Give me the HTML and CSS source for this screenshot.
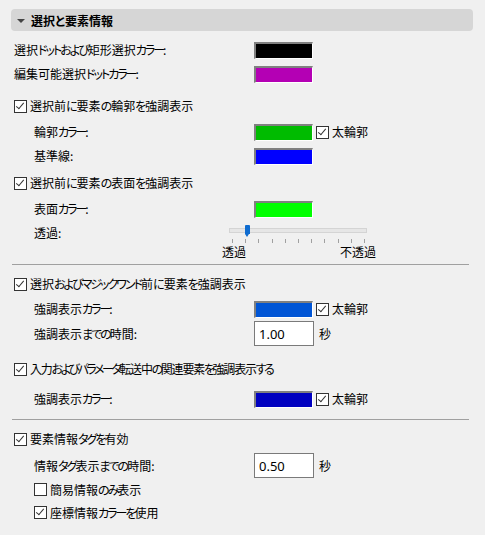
FILE: index.html
```html
<!DOCTYPE html>
<html lang="ja">
<head>
<meta charset="utf-8">
<link rel="stylesheet" href="styles.css">
</head>
<body>
<div class="panel">
  <div class="header">
    <span class="tri"></span>
    <span class="title">選択と要素情報</span>
  </div>

  <div class="row r1"><span class="label">選択<span class="k">ドットおよび</span>矩形選択<span class="k">カラー</span>:</span><span class="swatch" style="background:#000000"></span></div>
  <div class="row"><span class="label">編集可能選択<span class="k">ドットカラー</span>:</span><span class="swatch" style="background:#b400b4"></span></div>

  <div class="row cbrow m8"><span class="cb on"></span><span>選択前<span class="k1">に</span>要素<span class="k1">の</span>輪郭<span class="k1">を</span>強調表示</span></div>
  <div class="row sub m2"><span class="label">輪郭<span class="k">カラー</span>:</span><span class="swatch" style="background:#00bb00"></span><span class="cb on"></span><span class="cbtext">太輪郭</span></div>
  <div class="row sub"><span class="label">基準線:</span><span class="swatch" style="background:#0000ff"></span></div>

  <div class="row cbrow m3"><span class="cb on"></span><span>選択前<span class="k1">に</span>要素<span class="k1">の</span>表面<span class="k1">を</span>強調表示</span></div>
  <div class="row sub m2"><span class="label">表面<span class="k">カラー</span>:</span><span class="swatch" style="background:#00ff00"></span></div>
  <div class="slider-row">
    <span class="label">透過:</span>
    <div class="slider">
      <div class="track"><span class="thumb"></span></div>
      <div class="ticks"><i></i><i></i><i></i><i></i><i></i><i></i><i></i><i></i><i></i><i></i><i></i></div>
    </div>
  </div>
  <div class="slider-labels"><span>透過</span><span>不透過</span></div>
  <div class="sep s1"></div>

  <div class="row cbrow m7"><span class="cb on"></span><span>選択<span class="k">およびマジックワンド</span>前<span class="k1">に</span>要素<span class="k1">を</span>強調表示</span></div>
  <div class="row sub m1"><span class="label">強調表示<span class="k">カラー</span>:</span><span class="swatch" style="background:#0055d5"></span><span class="cb on"></span><span class="cbtext">太輪郭</span></div>
  <div class="row sub h25"><span class="label">強調表示<span class="k">までの</span>時間:</span><span class="num">1.00</span><span class="unit">秒</span></div>

  <div class="row cbrow m10"><span class="cb on"></span><span class="tight">入力<span class="k">およびパラメータ</span>転送中<span class="k">の</span>関連要素<span class="k">を</span>強調表示<span class="k">する</span></span></div>
  <div class="row sub m6"><span class="label">強調表示<span class="k">カラー</span>:</span><span class="swatch" style="background:#0000c0"></span><span class="cb on"></span><span class="cbtext">太輪郭</span></div>
  <div class="sep s2"></div>

  <div class="row cbrow m7"><span class="cb on"></span><span>要素情報<span class="k">タグを</span>有効</span></div>
  <div class="row sub h25 m2"><span class="label">情報<span class="k">タグ</span>表示<span class="k">までの</span>時間:</span><span class="num">0.50</span><span class="unit">秒</span></div>
  <div class="row sub h23"><span class="cb"></span><span>簡易情報<span class="k">のみ</span>表示</span></div>
  <div class="row sub h23"><span class="cb on"></span><span>座標情報<span class="k">カラーを</span>使用</span></div>
</div>
</body>
</html>
```
FILE: styles.css
```css
html, body {
  margin: 0;
  padding: 0;
  background: #f0f0f0;
}
body {
  font-family: "Noto Sans CJK JP", "Noto Sans", sans-serif;
  font-size: 12px;
  color: #000;
  font-feature-settings: "palt";
  width: 485px;
  height: 535px;
  overflow: hidden;
}
.k { letter-spacing: -2px; }
.k1 { letter-spacing: -1px; }
.tight { letter-spacing: -1.2px; }
.tight .k { letter-spacing: -2.5px; }
.panel {
  padding: 9px 14px 0 11px;
  display: flex;
  flex-direction: column;
}
.header {
  height: 22px;
  background: #d6d6d6;
  border-radius: 4px;
  display: flex;
  align-items: center;
  margin-right: -2px;
}
.tri {
  width: 0;
  height: 0;
  border-left: 4px solid transparent;
  border-right: 4px solid transparent;
  border-top: 4px solid #444;
  margin-left: 6px;
  margin-right: 6px;
  margin-top: 1px;
}
.title {
  font-weight: bold;
  font-size: 12px;
}
.row {
  height: 24px;
  display: flex;
  align-items: center;
  padding-left: 3px;
  line-height: 1;
}
.r1 { margin-top: 7px; }
.m1 { margin-top: 1px; }
.m2 { margin-top: 2px; }
.m3 { margin-top: 3px; }
.m6 { margin-top: 6px; }
.m7 { margin-top: 7px; }
.m8 { margin-top: 8px; }
.m10 { margin-top: 11px; }
.h25 { height: 25px; }
.h23 { height: 23px; }
.sub { padding-left: 23px; }
.label {
  width: 220px;
  flex: none;
  white-space: nowrap;
}
.row.sub .label { width: 220px; }
.row.r1 .label, .row:not(.sub) .label { width: 240px; }
.swatch {
  flex: none;
  width: 56px;
  height: 14px;
  border-style: solid;
  border-width: 2px 1px 1px 2px;
  border-color: #808080 #ffffff #ffffff #808080;
}
.cb {
  flex: none;
  width: 11px;
  height: 11px;
  border: 1px solid #333;
  background: #fff;
  position: relative;
  margin-right: 3px;
}
.cb.on::after {
  content: "";
  position: absolute;
  left: 3px;
  top: 0px;
  width: 3px;
  height: 7px;
  border-right: 1.5px solid #333;
  border-bottom: 1.5px solid #333;
  transform: rotate(40deg);
}
.swatch + .cb { margin-left: 3px; }
.cbtext { white-space: nowrap; }
.num {
  flex: none;
  box-sizing: border-box;
  width: 60px;
  height: 25px;
  border: 1px solid #7a7a7a;
  background: #fff;
  font-family: "Noto Sans", "Open Sans", sans-serif;
  font-size: 13px;
  display: flex;
  align-items: center;
  padding-left: 4px;
  padding-top: 1px;
}
.unit { margin-left: 5px; }
.slider-row {
  height: 22px;
  display: flex;
  align-items: center;
  padding-left: 23px;
}
.slider-row .label { width: 195px; padding-top: 1px; }
.slider {
  width: 138px;
  position: relative;
  height: 22px;
}
.track {
  position: absolute;
  left: 0;
  top: 7px;
  width: 136px;
  height: 3px;
  border: 1px solid #d4d4d4;
  background: #e6e6e6;
}
.thumb {
  position: absolute;
  left: 15px;
  top: -4px;
  width: 5px;
  height: 9px;
  background: #0f6cd0;
  border-radius: 1px 1px 0 0;
}
.thumb::after {
  content: "";
  position: absolute;
  left: 0;
  top: 9px;
  border-left: 2.5px solid transparent;
  border-right: 2.5px solid transparent;
  border-top: 3px solid #0f6cd0;
}
.ticks {
  position: absolute;
  left: 3px;
  top: 18px;
  width: 133px;
  display: flex;
  justify-content: space-between;
}
.ticks i {
  display: block;
  width: 1px;
  height: 4px;
  background: #a0a0a0;
}
.slider-labels {
  height: 18px;
  display: flex;
  justify-content: space-between;
  align-items: center;
  margin-left: 211px;
  width: 154px;
  line-height: 1;
}
.sep {
  height: 1px;
  background: #a0a0a0;
  margin-right: 2px;
  margin-left: 1px;
}
.s1 { margin-top: 3px; }
.s2 { margin-top: 8px; }
```
